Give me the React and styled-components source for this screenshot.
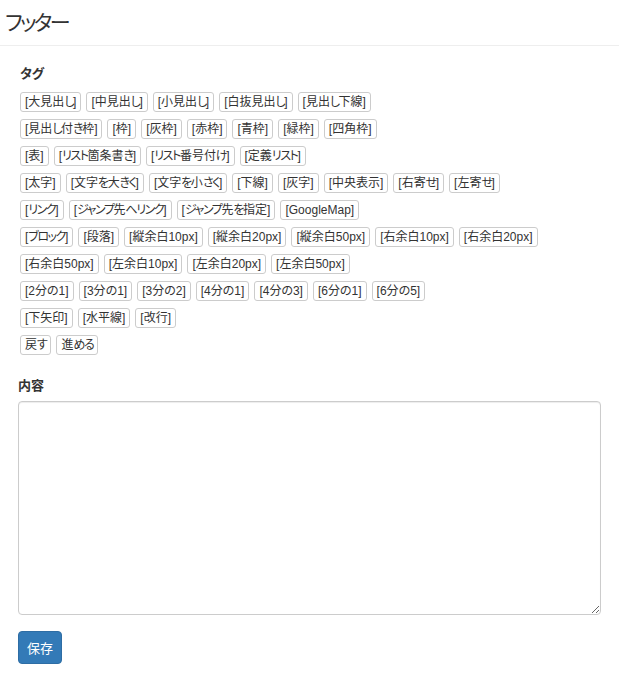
import React from "react";
import styled, { createGlobalStyle } from "styled-components";

const GlobalStyle = createGlobalStyle`
  html, body {
    margin: 0;
    padding: 0;
    background: #fff;
  }
  body {
    font-family: "Liberation Sans", "Noto Sans CJK JP", sans-serif;
    font-feature-settings: "palt";
    color: #333;
  }
  * {
    box-sizing: border-box;
  }
`;

const Header = styled.div`
  display: flex;
  align-items: center;
  height: 46px;
  padding-left: 5px;
  border-bottom: 1px solid #eee;
`;

const Title = styled.h1`
  margin: 0;
  font-size: 21px;
  font-weight: 400;
  line-height: 1.1;
  color: #333;
`;

// kana in the original font is narrower than in Noto
const Kana = styled.span`
  letter-spacing: -0.12em;
`;

const Body = styled.div`
  padding: 0 18px;
`;

const Label = styled.div`
  font-size: 13px;
  font-weight: 700;
  line-height: 18px;
  padding-left: ${(p) => (p.$inset ? "2px" : "0")};
  margin-top: ${(p) => p.$top}px;
  margin-bottom: ${(p) => p.$bottom}px;
`;

const TagGroup = styled.div`
  display: flex;
  flex-direction: column;
  gap: 7px;
  padding-left: 2px;
`;

const TagRow = styled.div`
  display: flex;
  flex-wrap: wrap;
  gap: 5px;
`;

const TagButton = styled.button`
  font-family: "Liberation Sans", "Noto Sans CJK JP", sans-serif;
  font-feature-settings: "palt";
  font-size: 12px;
  line-height: 18px;
  padding: 0 4px;
  color: #333;
  background: #fff;
  border: 1px solid #ccc;
  border-radius: 3px;
  cursor: pointer;
  white-space: nowrap;
`;

const TextArea = styled.textarea`
  display: block;
  width: 100%;
  height: 214px;
  border: 1px solid #ccc;
  border-radius: 4px;
  box-shadow: inset 0 1px 1px rgba(0, 0, 0, 0.075);
  padding: 6px 12px;
  font-size: 14px;
  font-family: inherit;
  resize: vertical;
`;

const SaveButton = styled.button`
  margin-top: 16px;
  height: 33px;
  padding: 0 8px;
  font-family: "Liberation Sans", "Noto Sans CJK JP", sans-serif;
  font-size: 13px;
  color: #fff;
  background: #337ab7;
  border: 1px solid #2e6da4;
  border-radius: 4px;
  cursor: pointer;
`;

const rows = [
  ["[大見出し]", "[中見出し]", "[小見出し]", "[白抜見出し]", "[見出し下線]"],
  ["[見出し付き枠]", "[枠]", "[灰枠]", "[赤枠]", "[青枠]", "[緑枠]", "[四角枠]"],
  ["[表]", "[リスト箇条書き]", "[リスト番号付け]", "[定義リスト]"],
  ["[太字]", "[文字を大きく]", "[文字を小さく]", "[下線]", "[灰字]", "[中央表示]", "[右寄せ]", "[左寄せ]"],
  ["[リンク]", "[ジャンプ先へリンク]", "[ジャンプ先を指定]", "[GoogleMap]"],
  ["[ブロック]", "[段落]", "[縦余白10px]", "[縦余白20px]", "[縦余白50px]", "[右余白10px]", "[右余白20px]"],
  ["[右余白50px]", "[左余白10px]", "[左余白20px]", "[左余白50px]"],
  ["[2分の1]", "[3分の1]", "[3分の2]", "[4分の1]", "[4分の3]", "[6分の1]", "[6分の5]"],
  ["[下矢印]", "[水平線]", "[改行]"],
  ["戻す", "進める"],
];

const kanaRe = /([\u3041-\u306D\u306F-\u309F\u30A0-\u30FF]+)/;

function withKana(text) {
  return text.split(kanaRe).map((part, i) =>
    i % 2 === 1 ? <Kana key={i}>{part}</Kana> : part
  );
}

export default function App() {
  return (
    <>
      <GlobalStyle />
      <Header>
        <Title>{withKana("フッター")}</Title>
      </Header>
      <Body>
        <Label $inset $top={19} $bottom={9}>
          タグ
        </Label>
        <TagGroup>
          {rows.map((row, i) => (
            <TagRow key={i}>
              {row.map((t) => (
                <TagButton key={t} type="button">
                  {withKana(t)}
                </TagButton>
              ))}
            </TagRow>
          ))}
        </TagGroup>
        <Label $top={22} $bottom={6}>
          内容
        </Label>
        <TextArea />
        <SaveButton type="button">保存</SaveButton>
      </Body>
    </>
  );
}
